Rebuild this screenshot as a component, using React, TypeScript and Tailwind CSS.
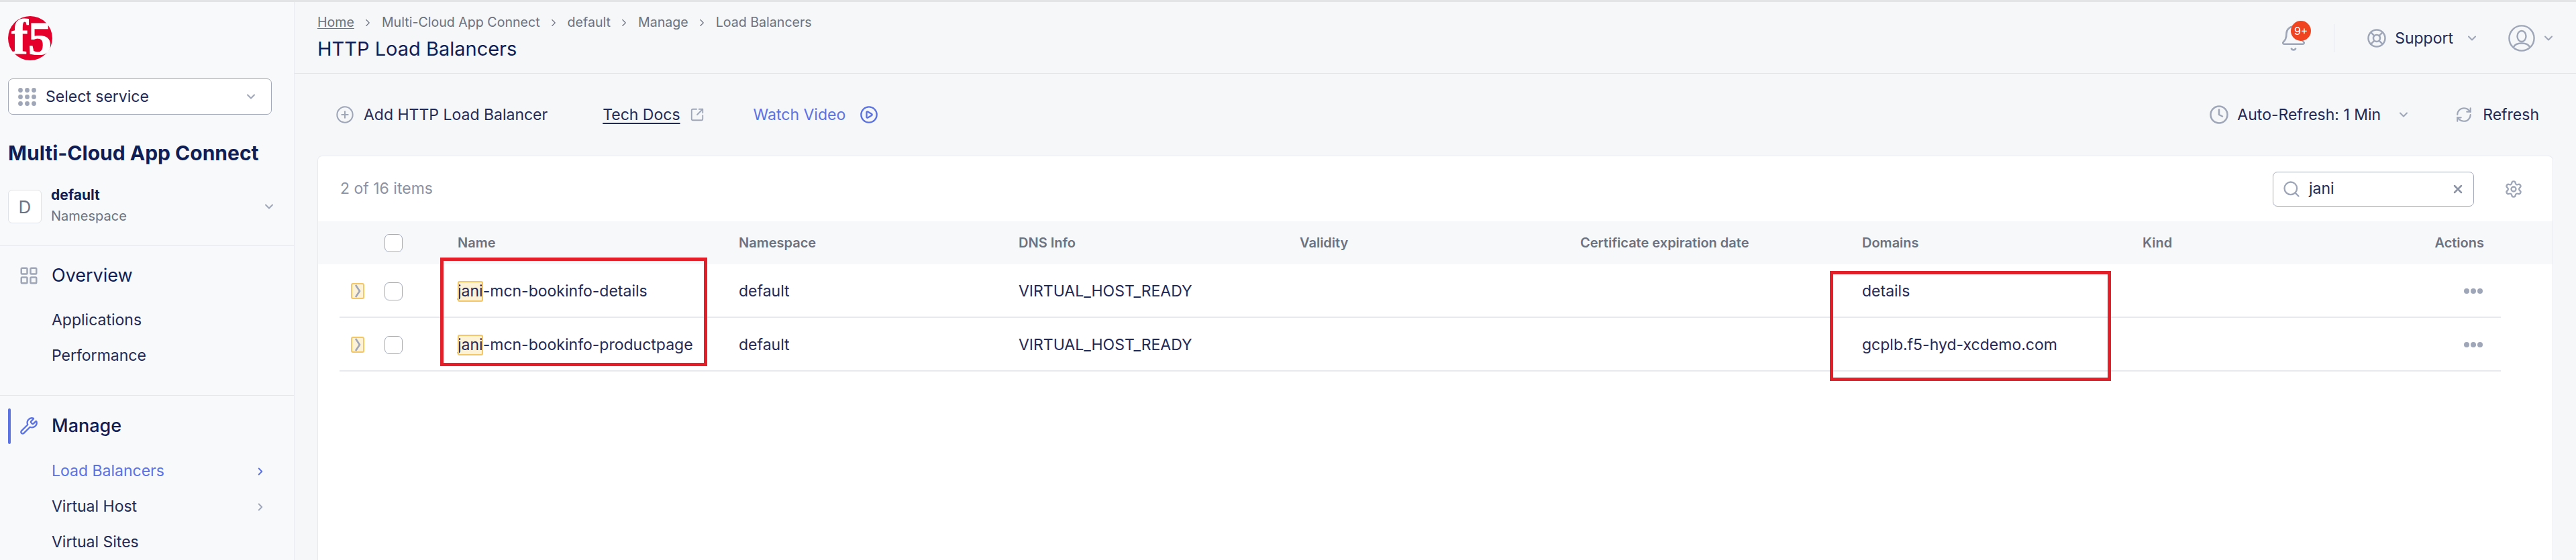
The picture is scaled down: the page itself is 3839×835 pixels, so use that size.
import React from 'react';
import {
  ChevronDown, ChevronRight, CirclePlay, CirclePlus, Clock, LayoutGrid, LifeBuoy,
  RefreshCw, Search, Settings, SquareArrowOutUpRight, Wrench, X, Bell,
} from 'lucide-react';

const cols = 'grid grid-cols-[176px_419px_417px_419px_418px_420px_418px_1fr_auto] items-center';

const rows = [
  { rest: '-mcn-bookinfo-details', domain: 'details' },
  { rest: '-mcn-bookinfo-productpage', domain: 'gcplb.f5-hyd-xcdemo.com' },
];

function F5Logo() {
  return (
    <svg viewBox="0 0 66 66" className="h-[66px] w-[66px] overflow-visible">
      <circle cx="33" cy="33" r="33" fill="#e4002b" />
      <text x="5" y="56" fontFamily="Liberation Serif, serif" fontWeight="700" fontSize="74" fill="#fff" stroke="#fff" strokeWidth="1.2">f</text>
      <text x="30" y="57" fontFamily="Liberation Serif, serif" fontWeight="700" fontSize="70" fill="#fff" stroke="#fff" strokeWidth="1.2">5</text>
    </svg>
  );
}

function GridDots() {
  return (
    <svg viewBox="0 0 27 27" className="h-[27px] w-[27px] text-[#9ea6b8]" fill="currentColor">
      {[3.5, 13.5, 23.5].map((y) =>
        [3.5, 13.5, 23.5].map((x) => <circle key={`${x}-${y}`} cx={x} cy={y} r="3.4" />),
      )}
    </svg>
  );
}

function Avatar() {
  return (
    <svg viewBox="0 0 40 40" className="h-[40px] w-[40px] text-[#9ea6b8]" fill="none" stroke="currentColor" strokeWidth="2.4">
      <circle cx="20" cy="20" r="18.6" />
      <ellipse cx="20" cy="17" rx="6.5" ry="8" />
      <path d="M8 33c2-4 7-5.500 12-5.500s10 1.500 12 5.500" />
    </svg>
  );
}

function SubItem({ label, active, arrow }: { label: string; active?: boolean; arrow?: boolean }) {
  return (
    <div className={`flex h-[53px] items-center justify-between pl-[77px] pr-[41px] text-[23px] ${active ? 'text-[#5a72e4]' : 'text-[#1f2a58]'}`}>
      <span>{label}</span>
      {arrow && <ChevronRight className={`h-[18px] w-[18px] ${active ? 'text-[#5a72e4]' : 'text-[#9ea6b8]'}`} strokeWidth={2.5} />}
    </div>
  );
}

function Sidebar() {
  return (
    <aside className="h-full w-[439px] shrink-0 overflow-hidden border-r border-[#e8eaef] bg-[#f8f9fb]">
      <div className="px-[12px] pt-[21px]">
        <F5Logo />
        <div className="mt-[27px] flex h-[54px] w-[393px] items-center rounded-[7px] border border-[#a3a9b8] bg-white pl-[14px] pr-[20px]">
          <GridDots />
          <span className="ml-[14px] flex-1 text-[23px] text-[#1f2a58]">Select service</span>
          <ChevronDown className="h-[20px] w-[20px] text-[#9ea6b8]" strokeWidth={2.5} />
        </div>
        <h2 className="mt-[37px] h-[40px] text-[30px] font-bold leading-[40px] text-[#0f1e57]">Multi-Cloud App Connect</h2>
        <div className="mt-[35px] flex h-[50px] items-center">
          <div className="flex h-[50px] w-[50px] items-center justify-center rounded-[6px] border border-[#dfe2e8] bg-white text-[26px] text-[#6b7280]">D</div>
          <div className="ml-[14px] flex-1">
            <div className="-mt-[5px] text-[21px] font-bold leading-[30px] text-[#0f1e57]">default</div>
            <div className="mt-[3px] text-[20px] leading-[26px] text-[#6b7280]">Namespace</div>
          </div>
          <ChevronDown className="mr-[15px] h-[20px] w-[20px] text-[#9ea6b8]" strokeWidth={2.5} />
        </div>
      </div>
      <div className="mt-[33px] border-t border-[#e4e6eb] pt-[17px]">
        <div className="flex h-[54px] items-center pl-[28px]">
          <LayoutGrid className="h-[30px] w-[30px] text-[#9ea6b8]" strokeWidth={2} />
          <span className="ml-[19px] text-[27px] text-[#0f1e57]">Overview</span>
        </div>
        <div className="mt-[13px]"><SubItem label="Applications" /><SubItem label="Performance" /></div>
      </div>
      <div className="mt-[32px] border-t border-[#e4e6eb] pt-[18px]">
        <div className="flex h-[54px] items-center pl-[12px]">
          <div className="h-[53px] w-[4px] rounded-full bg-[#5a72e4]" />
          <Wrench className="ml-[13px] h-[28px] w-[28px] text-[#5a72e4]" strokeWidth={2} />
          <span className="ml-[20px] text-[27px] font-medium text-[#0f1e57]">Manage</span>
        </div>
        <div className="mt-[14px]">
          <SubItem label="Load Balancers" active arrow />
          <SubItem label="Virtual Host" arrow />
          <SubItem label="Virtual Sites" />
        </div>
      </div>
    </aside>
  );
}

function Topbar() {
  const crumbs = ['Multi-Cloud App Connect', 'default', 'Manage', 'Load Balancers'];
  return (
    <header className="flex h-[107px] shrink-0 items-start justify-between border-b border-[#e4e6eb] pl-[34px] pr-[31px]">
      <div className="pt-[17px]">
        <div className="flex h-[28px] items-center text-[19.6px] text-[#6b7280]">
          <span className="underline underline-offset-2">Home</span>
          {crumbs.map((c) => (
            <React.Fragment key={c}>
              <ChevronRight className="ml-[11px] mr-[12px] h-[18px] w-[18px] text-[#6b7280]" strokeWidth={1.5} />
              <span>{c}</span>
            </React.Fragment>
          ))}
        </div>
        <h1 className="mt-[5px] text-[29px] leading-[40px] text-[#0f1e57]">HTTP Load Balancers</h1>
      </div>
      <div className="flex h-[72px] items-center pt-[36px]">
        <div className="relative mr-[39px]">
          <Bell className="h-[42px] w-[42px] text-[#9ea6b8]" strokeWidth={1.5} />
          <span className="absolute -right-[5px] -top-[5px] flex h-[30px] w-[30px] items-center justify-center rounded-full bg-[#f0431f] text-[16px] text-white">9+</span>
        </div>
        <div className="h-[42px] w-px bg-[#e4e6eb]" />
        <LifeBuoy className="ml-[48px] h-[30px] w-[30px] text-[#9ea6b8]" strokeWidth={2} />
        <span className="ml-[12px] text-[23px] text-[#1f2a58]">Support</span>
        <ChevronDown className="ml-[18px] h-[20px] w-[20px] text-[#9ea6b8]" strokeWidth={2.5} />
        <div className="ml-[44px]"><Avatar /></div>
        <ChevronDown className="ml-[10px] h-[20px] w-[20px] text-[#9ea6b8]" strokeWidth={2.5} />
      </div>
    </header>
  );
}

function Toolbar() {
  return (
    <div className="flex h-[122px] shrink-0 items-center justify-between pl-[61px] pr-[55px] text-[23px] text-[#1f2a58]">
      <div className="flex items-center">
        <CirclePlus className="h-[28px] w-[28px] text-[#9ea6b8]" strokeWidth={1.75} />
        <span className="ml-[14px]">Add HTTP Load Balancer</span>
        <span className="ml-[82px] underline underline-offset-4">Tech Docs</span>
        <SquareArrowOutUpRight className="ml-[14px] h-[22px] w-[22px] text-[#9ea6b8]" strokeWidth={2} />
        <span className="ml-[73px] text-[#5a72e4]">Watch Video</span>
        <CirclePlay className="ml-[21px] h-[28px] w-[28px] text-[#5a72e4]" strokeWidth={2} />
      </div>
      <div className="flex items-center">
        <Clock className="h-[30px] w-[30px] text-[#9ea6b8]" strokeWidth={2} />
        <span className="ml-[12px]">Auto-Refresh: 1 Min</span>
        <ChevronDown className="ml-[24px] h-[20px] w-[20px] text-[#9ea6b8]" strokeWidth={2.5} />
        <RefreshCw className="ml-[67px] h-[26px] w-[26px] text-[#9ea6b8]" strokeWidth={2} />
        <span className="ml-[15px]">Refresh</span>
      </div>
    </div>
  );
}

function Checkbox() {
  return <div className="h-[27px] w-[27px] rounded-[7px] border border-[#a3a9b8] bg-white" />;
}

function LbTable() {
  const headers = ['Name', 'Namespace', 'DNS Info', 'Validity', 'Certificate expiration date', 'Domains', 'Kind'];
  return (
    <>
      <div className="bg-[#f7f8fa]">
        <div className={`${cols} ml-[32px] mr-[77px] h-[64px] pr-[25px] text-[20px] font-semibold text-[#6b7280]`}>
          <div className="pl-[67px]"><Checkbox /></div>
          {headers.map((h) => <div key={h}>{h}</div>)}
          <div>Actions</div>
        </div>
      </div>
      {rows.map((r) => (
        <div key={r.domain} className={`${cols} ml-[32px] mr-[77px] h-[80px] border-b-2 border-[#e8e9ef] pr-[25px] pt-[2px] text-[23px] text-[#1f2a58]`}>
          <div className="flex items-center pl-[17px]">
            <div className="flex h-[24px] w-[20px] items-center justify-center rounded-[3px] border-2 border-[#f3c667] bg-[#fdf1d6]">
              <svg viewBox="0 0 10 20" className="h-[20px] w-[10px] text-[#9ea6b8]" fill="none" stroke="currentColor" strokeWidth="2.6">
                <path d="M2 1l6 9-6 9" />
              </svg>
            </div>
            <div className="ml-[30px]"><Checkbox /></div>
          </div>
          <div>
            <span className="inline-block h-[31px] rounded-[3px] bg-[#fdf1d6] leading-[31px] outline-2 -outline-offset-2 outline-[#f3c667]">jani</span>{r.rest}
          </div>
          <div>default</div>
          <div>VIRTUAL_HOST_READY</div>
          <div />
          <div />
          <div>{r.domain}</div>
          <div />
          <div className="mr-[2px] flex justify-end gap-[2px]">
            {[0, 1, 2].map((d) => <span key={d} className="h-[8px] w-[8px] rounded-full bg-[#9ea6b8]" />)}
          </div>
        </div>
      ))}
    </>
  );
}

export default function App() {
  return (
    <div className="relative h-[835px] w-[3839px] overflow-hidden bg-[#f6f7f9] [font-family:Inter,sans-serif]">
      <div className="h-[3px] bg-[#e3e4e6]" />
      <div className="flex h-[832px]">
        <Sidebar />
        <main className="flex min-w-0 flex-1 flex-col">
          <Topbar />
          <Toolbar />
          <section className="ml-[34px] mr-[34px] flex-1 rounded-t-[7px] border border-b-0 border-[#e8eaef] bg-white">
            <div className="flex h-[97px] items-center justify-between pl-[33px] pr-[44px]">
              <span className="text-[23px] text-[#8b92a3]">2 of 16 items</span>
              <div className="flex items-center">
                <div className="flex h-[52px] w-[300px] items-center rounded-[7px] border border-[#a3a9b8] px-[13px]">
                  <Search className="h-[28px] w-[28px] text-[#9ea6b8]" strokeWidth={2} />
                  <span className="ml-[12px] flex-1 text-[23px] text-[#1f2a58]">jani</span>
                  <X className="h-[20px] w-[20px] text-[#8b92a3]" strokeWidth={3} />
                </div>
                <Settings className="ml-[45px] h-[28px] w-[28px] text-[#9ea6b8]" strokeWidth={2} />
              </div>
            </div>
            <LbTable />
          </section>
        </main>
      </div>
      {/* red annotation boxes drawn over the screenshot */}
      <div className="absolute left-[656px] top-[384px] h-[162px] w-[398px] border-[5px] border-[#e3202a]" />
      <div className="absolute left-[2727px] top-[404px] h-[164px] w-[419px] border-[5px] border-[#e3202a]" />
    </div>
  );
}
